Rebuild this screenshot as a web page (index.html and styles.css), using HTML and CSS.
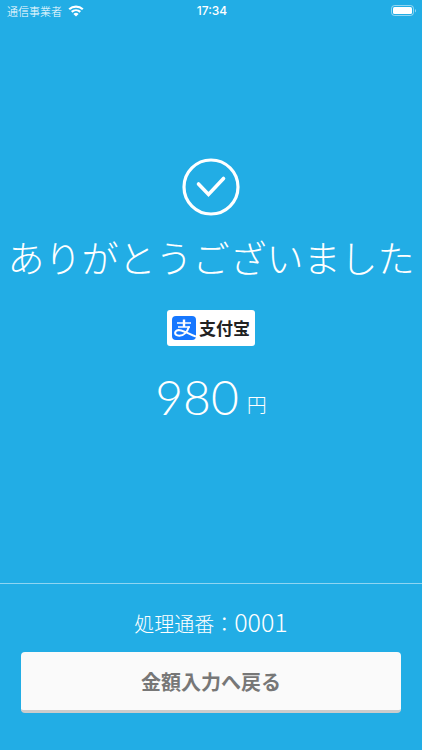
FILE: index.html
```html
<!DOCTYPE html>
<html lang="ja">
<head>
    <meta charset="UTF-8">
    <meta name="viewport" content="width=device-width, initial-scale=1.0">
    <title>お支払い完了</title>
    <link rel="stylesheet" href="styles.css">
</head>
<body>

    <header class="status-bar">
        <div class="carrier">
            <span>通信事業者</span>
            <svg class="wifi" viewBox="0 0 16 12" aria-hidden="true">
                <path d="M1.2 4.2a10 10 0 0 1 13.6 0M3.7 6.9a6.4 6.4 0 0 1 8.6 0" fill="none" stroke="#fff" stroke-width="2.2"/>
                <path d="M8 11.6 5.4 8.9a3.8 3.8 0 0 1 5.2 0z" fill="#fff"/>
            </svg>
        </div>
        <time class="clock">17:34</time>
        <svg class="battery" viewBox="0 0 26 12" aria-label="バッテリー">
            <rect x="0.5" y="0.5" width="22" height="10" rx="3" fill="none" stroke="#fff" stroke-opacity="0.5"/>
            <rect x="2" y="2" width="19" height="7" rx="1.5" fill="#fff"/>
            <path d="M24 4c1.4.6 1.4 2.9 0 3.500z" fill="#fff" fill-opacity="0.5"/>
        </svg>
    </header>

    <main class="result">
        <svg class="check" viewBox="0 0 58 58" aria-hidden="true">
            <circle cx="29" cy="29" r="27" fill="none" stroke="#fff" stroke-width="3.2"/>
            <path d="M16.5 26 26.5 36.500 41.5 20.500" fill="none" stroke="#fff" stroke-width="3.6" stroke-linecap="round"/>
        </svg>
        <h1>ありがとうございました</h1>
        <div class="brand">
            <svg class="brand-icon" viewBox="0 0 24 24" aria-hidden="true">
                <rect width="24" height="24" rx="4" fill="#1677ff"/>
                <g fill="none" stroke="#fff">
                    <path d="M5 7h14M6 11h12" stroke-width="1.7"/>
                    <path d="M12 3.500v7.500" stroke-width="2.4"/>
                    <path d="M17 10.500C15.500 15.500 11.800 19.700 7.200 19.700c-2.900 0-4.200-1.400-4-3.100.2-1.800 2.100-2.700 4.400-2.400C12.200 14.800 17 18 24 20.500" stroke-width="2.1"/>
                </g>
            </svg>
            <span>支付宝</span>
        </div>
        <p class="amount"><span class="price">980</span><span class="unit">円</span></p>
    </main>

    <footer class="bottom">
        <p class="serial">処理通番：<span class="number">0001</span></p>
        <button type="button" class="back-button">金額入力へ戻る</button>
    </footer>

</body>
</html>
```
FILE: styles.css
```css
* {
    box-sizing: border-box;
}
body {
    font-family: "Noto Sans CJK JP", sans-serif;
    color: #fff;
    background: #22ade5;
    margin: 0;
    min-height: 100vh;
    display: flex;
    flex-direction: column;
}
.status-bar {
    display: grid;
    grid-template-columns: 1fr auto 1fr;
    align-items: center;
    height: 22px;
    padding: 0 5px 0 7px;
    font-size: 11px;
    line-height: 22px;
}
.carrier {
    display: flex;
    align-items: center;
    gap: 6px;
    font-weight: 300;
}
.wifi {
    width: 16px;
    height: 12px;
}
.clock {
    font-family: Inter, sans-serif;
    font-size: 12px;
    font-weight: 500;
}
.battery {
    width: 26px;
    height: 12px;
    justify-self: end;
}
.result {
    flex: 1;
    display: flex;
    flex-direction: column;
    align-items: center;
    padding-top: 136px;
}
.check {
    width: 58px;
    height: 58px;
}
h1 {
    margin: 14px 0 0;
    font-size: 37px;
    font-weight: 300;
    line-height: 54px;
    white-space: nowrap;
}
.brand {
    display: flex;
    align-items: center;
    gap: 3px;
    height: 36px;
    margin-top: 26px;
    padding: 0 5px;
    border-radius: 3px;
    background: #fff;
    color: #222;
    font-family: "Noto Sans CJK SC", sans-serif;
    font-size: 17px;
    font-weight: 700;
    line-height: 36px;
}
.brand-icon {
    width: 24px;
    height: 24px;
}
.amount {
    display: flex;
    align-items: center;
    gap: 8px;
    margin: 21px 0 0;
    line-height: 60px;
}
.price {
    font-family: Lato, sans-serif;
    font-size: 48px;
    font-weight: 300;
}
.unit {
    padding-top: 16px;
    font-size: 20px;
    font-weight: 300;
    line-height: 30px;
}
.bottom {
    border-top: 1px solid #8fd5f2;
    padding: 22px 21px 37px;
    text-align: center;
}
.serial {
    margin: 0 0 10px;
    font-size: 20px;
    font-weight: 300;
    line-height: 36px;
}
.number {
    font-size: 25px;
    line-height: 30px;
}
.back-button {
    display: block;
    width: 100%;
    height: 61px;
    padding: 0;
    border: none;
    border-bottom: 3px solid #ccc;
    border-radius: 4px;
    background: #fafafa;
    color: #777;
    font-family: inherit;
    font-size: 20px;
    font-weight: 700;
    cursor: pointer;
}
```
